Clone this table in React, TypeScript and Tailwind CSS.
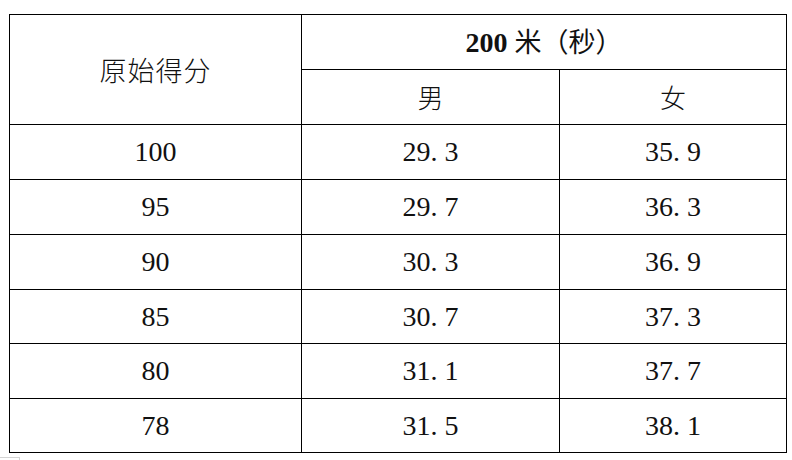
const rows: { score: string; male: string; female: string; h: string }[] = [
  { score: "100", male: "29.3", female: "35.9", h: "h-[55px]" },
  { score: "95", male: "29.7", female: "36.3", h: "h-[55px]" },
  { score: "90", male: "30.3", female: "36.9", h: "h-[55px]" },
  { score: "85", male: "30.7", female: "37.3", h: "h-[54px]" },
  { score: "80", male: "31.1", female: "37.7", h: "h-[55px]" },
  { score: "78", male: "31.5", female: "38.1", h: "h-[54px]" },
]

// SimSun-style half-width dot leaves a gap before the decimal
function Decimal({ value }: { value: string }) {
  const [a, b] = value.split(".")
  return (
    <span className="font-[Liberation_Serif]">
      {a}
      <span className="mr-[7px]">.</span>
      {b}
    </span>
  )
}

export default function App() {
  return (
    <div className="min-h-[460px] w-[792px] bg-white pt-[14px] pl-[9px] text-[#111] text-[28px] leading-none">
      <table className="table-fixed border-collapse w-[777px]">
        <colgroup>
          <col className="w-[292px]" />
          <col className="w-[258px]" />
          <col className="w-[227px]" />
        </colgroup>
        <thead>
          <tr className="h-[55px]">
            <th rowSpan={2} className="border border-black text-center align-middle p-0 font-[Noto_Sans_CJK_SC] font-light tracking-[1px] text-[27px]">
              原始得分
            </th>
            <th colSpan={2} className="border border-black text-center align-middle p-0 font-bold">
              <span className="font-[Liberation_Serif]">200 </span>
              <span className="font-[Noto_Sans_CJK_SC] font-normal text-[27px]">米（秒）</span>
            </th>
          </tr>
          <tr className="h-[55px]">
            <th className="border border-black text-center align-middle p-0 font-[Noto_Sans_CJK_SC] font-light text-[26px]">男</th>
            <th className="border border-black text-center align-middle p-0 font-[Noto_Sans_CJK_SC] font-light text-[26px]">女</th>
          </tr>
        </thead>
        <tbody className="font-[Liberation_Serif]">
          {rows.map(r => (
            <tr key={r.score} className={r.h}>
              <td className="border border-black text-center align-middle p-0">
                <span className="font-[Liberation_Serif]">{r.score}</span>
              </td>
              <td className="border border-black text-center align-middle p-0">
                <Decimal value={r.male} />
              </td>
              <td className="border border-black text-center align-middle p-0">
                <Decimal value={r.female} />
              </td>
            </tr>
          ))}
        </tbody>
      </table>
      <div className="w-[20px] h-[4px] mt-[4px] -ml-[9px] border-t border-r border-[#d4d4d4]" />
    </div>
  )
}
